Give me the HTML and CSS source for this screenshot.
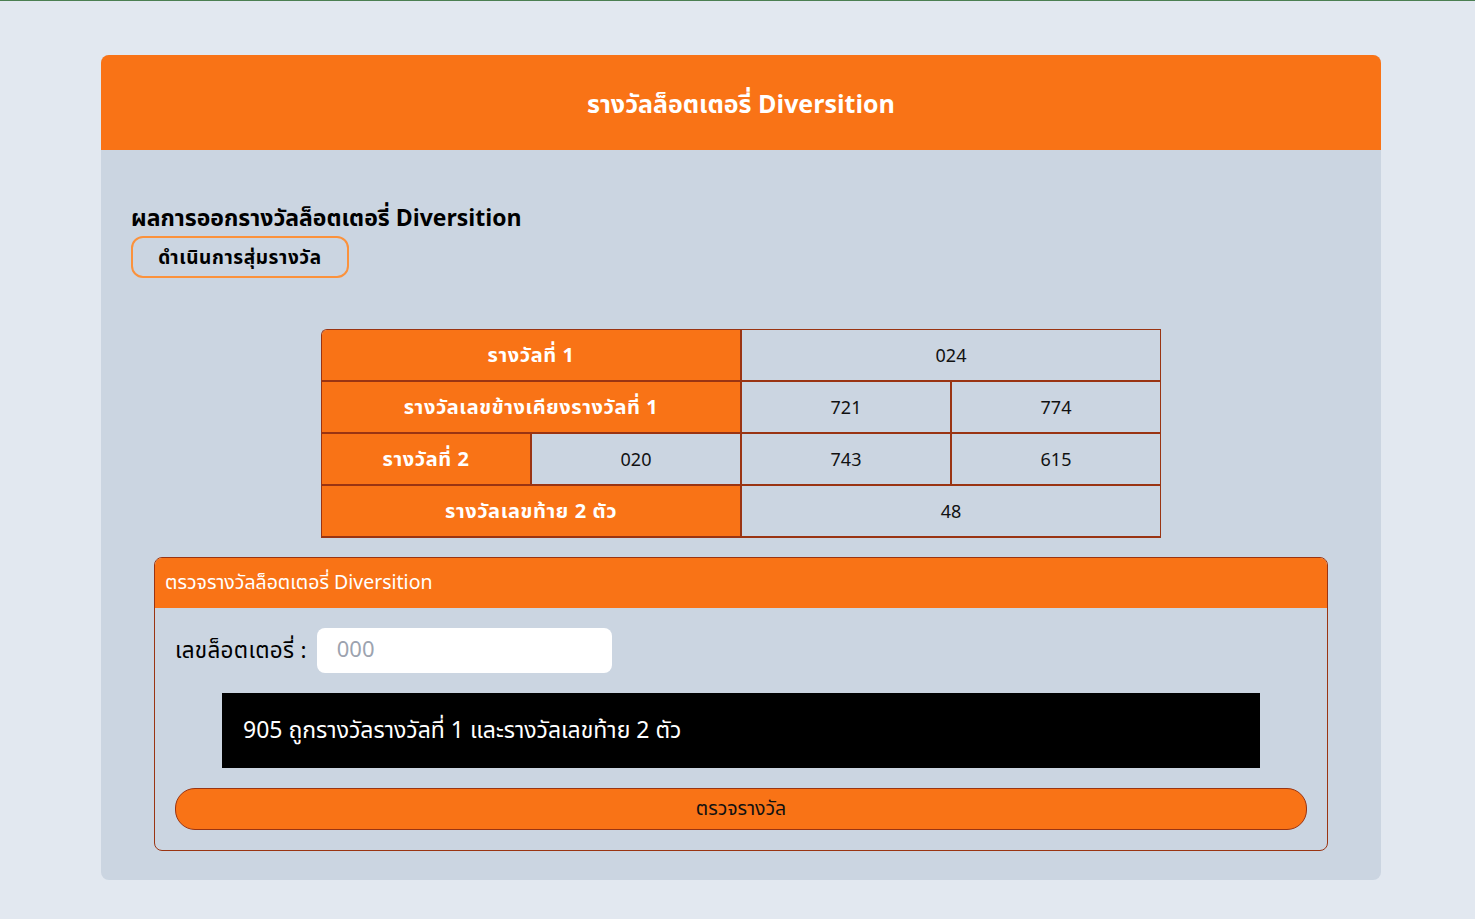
FILE: index.html
```html
<!DOCTYPE html>
<html lang="th">
<head>
<meta charset="utf-8">
<title>รางวัลล็อตเตอรี่ Diversition</title>
<link rel="stylesheet" href="styles.css">
</head>
<body>
<div class="topline"></div>
<main class="card">
  <header class="card-head">รางวัลล็อตเตอรี่ Diversition</header>
  <section class="card-body">
    <h2 class="result-title">ผลการออกรางวัลล็อตเตอรี่ Diversition</h2>
    <button class="draw-btn">ดำเนินการสุ่มรางวัล</button>

    <div class="prize-table">
      <div class="cell th span2">รางวัลที่ 1</div>
      <div class="cell span2">024</div>
      <div class="cell th span2">รางวัลเลขข้างเคียงรางวัลที่ 1</div>
      <div class="cell">721</div>
      <div class="cell">774</div>
      <div class="cell th">รางวัลที่ 2</div>
      <div class="cell">020</div>
      <div class="cell">743</div>
      <div class="cell">615</div>
      <div class="cell th span2">รางวัลเลขท้าย 2 ตัว</div>
      <div class="cell span2">48</div>
    </div>

    <div class="check">
      <div class="check-head">ตรวจรางวัลล็อตเตอรี่ Diversition</div>
      <div class="check-body">
        <div class="field">
          <label class="field-label">เลขล็อตเตอรี่ :</label>
          <input class="field-input" type="text" placeholder="000">
        </div>
        <div class="result-box">905 ถูกรางวัลรางวัลที่ 1 และรางวัลเลขท้าย 2 ตัว</div>
        <button class="check-btn">ตรวจรางวัล</button>
      </div>
    </div>
  </section>
</main>
</body>
</html>
```
FILE: styles.css
```css
* { box-sizing: border-box; }
html, body { margin: 0; padding: 0; }
body {
  background: #e2e8f0;
  font-family: "Noto Sans Thai", "Leelawadee UI", "Noto Sans", "Open Sans", sans-serif;
  color: #000;
  min-height: 919px;
  padding-left: 7px;
}
.topline { height: 1px; background: #4b7f52; margin-left: -7px; }
.card {
  width: 1280px;
  margin: 54px auto 0;
  background: #cbd5e1;
  border-radius: 8px;
  overflow: hidden;
}
.card-head {
  height: 95px;
  padding-top: 4px;
  background: #f97316;
  color: #fff;
  font-weight: 700;
  font-size: 25px;
  display: flex;
  align-items: center;
  justify-content: center;
}
.card-body {
  padding: 52px 30px 29px;
  display: flex;
  flex-direction: column;
  align-items: flex-start;
}
.result-title {
  margin: 0;
  font-size: 23px;
  font-weight: 700;
  line-height: 34px;
}
.draw-btn {
  margin-top: 0;
  height: 42px;
  width: 218px;
  padding: 2px 0 0;
  background: transparent;
  border: 2px solid #fb923c;
  border-radius: 12px;
  font-family: inherit;
  font-size: 19px;
  font-weight: 700;
  letter-spacing: 0.6px;
  color: #000;
}
.prize-table {
  align-self: center;
  margin-top: 51px;
  width: 840px;
  display: grid;
  grid-template-columns: repeat(4, 210px);
  grid-auto-rows: 52px;
  border-top: 1px solid #9a3412;
  border-left: 1px solid #9a3412;
  border-radius: 6px 0 0 0;
  overflow: hidden;
}
.cell {
  display: flex;
  align-items: center;
  justify-content: center;
  font-size: 18px;
  color: #111;
  padding-top: 2px;
  border-right: 2px solid #9a3412;
  border-bottom: 2px solid #9a3412;
}
.cell.th {
  background: #f97316;
  color: #fff;
  font-weight: 700;
  font-size: 20px;
  letter-spacing: 0.6px;
}
.span2 { grid-column: span 2; }
.check {
  align-self: stretch;
  margin: 19px 23px 0;
  border: 1px solid #9a3412;
  border-radius: 8px;
  overflow: hidden;
}
.check-head {
  height: 50px;
  background: #f97316;
  color: #fff;
  font-size: 19.5px;
  display: flex;
  align-items: center;
  padding: 0 10px;
}
.check-body {
  padding: 20px 20px 20px;
  display: flex;
  flex-direction: column;
}
.field {
  display: flex;
  align-items: center;
  gap: 10px;
}
.field-label { font-size: 22.5px; letter-spacing: 0.3px; }
.field-input {
  width: 295px;
  height: 45px;
  border: none;
  border-radius: 8px;
  background: #fff;
  font-family: inherit;
  font-size: 22px;
  padding: 0 20px;
  outline: none;
}
.field-input::placeholder { color: #9ca3af; }
.result-box {
  margin: 20px 47px 0;
  height: 75px;
  background: #000;
  color: #fff;
  font-size: 23px;
  display: flex;
  align-items: center;
  padding: 0 21px;
}
.check-btn {
  margin-top: 20px;
  height: 42px;
  background: #f97316;
  border: 1px solid #9a3412;
  border-radius: 20px;
  font-family: inherit;
  font-size: 19.5px;
  color: #111;
}
```
